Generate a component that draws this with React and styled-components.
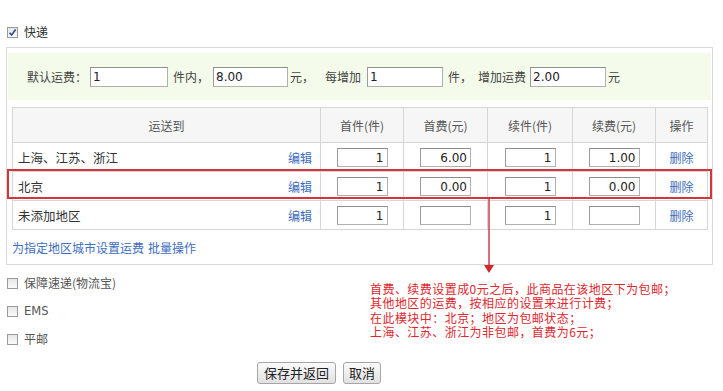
import React from 'react';
import styled, { createGlobalStyle } from 'styled-components';

const Global = createGlobalStyle`
  html, body { margin: 0; padding: 0; background: #fff; }
  body {
    font-family: "Noto Sans CJK SC", "Liberation Sans", sans-serif;
    font-size: 12px;
    color: #333;
  }
`;

const Page = styled.div`
  width: 723px;
  height: 391px;
  box-sizing: border-box;
  padding: 25px 10px 0 6px;
  overflow: hidden;
`;

const CheckRow = styled.label`
  display: flex;
  align-items: center;
  height: 14px;
  gap: 4px;
  color: ${p => p.$color || '#444'};
  font-size: 12px;
  line-height: 14px;
`;

const Box = styled.span`
  width: 11px;
  height: 11px;
  box-sizing: border-box;
  border: 1px solid #9a9a9a;
  background: linear-gradient(#e6e6e6, #fbfbfb);
  display: inline-flex;
  align-items: center;
  justify-content: center;
  margin-left: 1px;
  margin-right: 2px;
`;

const Panel = styled.div`
  position: relative;
  margin-top: 8px;
  width: 707px;
  box-sizing: border-box;
  border: 1px solid #d9d9d9;
  padding: 5px 5px 0;
`;

const Band = styled.div`
  display: flex;
  align-items: center;
  height: 47px;
  margin: 0 -4px;
  padding-left: 19px;
  background: #f4fbea;
  color: #444;
  white-space: nowrap;
`;

const BandText = styled.span`
  margin-left: ${p => p.$ml || 0}px;
`;

const Field = styled.input`
  width: ${p => p.$w}px;
  height: 20px;
  box-sizing: border-box;
  margin-left: ${p => p.$ml || 0}px;
  border: 1px solid #b0b0b0;
  border-top-color: #8e8e8e;
  border-left-color: #9c9c9c;
  padding: 0 2px;
  font-family: "DejaVu Sans", sans-serif;
  font-size: 12px;
  color: #222;
  background: #fff;
  outline: none;
`;

const Table = styled.table`
  margin-top: 7px;
  width: 695px;
  border-collapse: collapse;
  table-layout: fixed;
  border: 1px solid #d6d6d6;
`;

const Th = styled.th`
  height: 34px;
  padding: 0;
  font-weight: normal;
  font-size: 12px;
  color: #555;
  background: #f6f6f6;
  border: 1px solid #d6d6d6;
  text-align: center;
`;

const Td = styled.td`
  height: 28px;
  padding: 0;
  border: 1px solid #d6d6d6;
  text-align: center;
  vertical-align: middle;
`;

const AreaCell = styled.div`
  display: flex;
  justify-content: space-between;
  align-items: center;
  padding: 0 8px 0 5px;
  color: #333;
  font-size: 12.5px;
`;

const Link = styled.a`
  color: #3d6cc0;
  text-decoration: none;
  font-size: 12px;
  cursor: pointer;
`;

const CellInput = styled.input`
  width: 51px;
  height: 19px;
  box-sizing: border-box;
  border: 1px solid #b0b0b0;
  border-top-color: #8e8e8e;
  border-left-color: #9c9c9c;
  padding: 0 3px;
  text-align: right;
  font-family: "DejaVu Sans", sans-serif;
  font-size: 12px;
  color: #222;
  background: #fff;
  outline: none;
  vertical-align: middle;
`;

const LinkRow = styled.div`
  height: 34px;
  display: flex;
  align-items: center;
  gap: 4px;
`;

const Highlight = styled.div`
  position: absolute;
  left: 0;
  top: 121px;
  width: 705px;
  height: 30px;
  box-sizing: border-box;
  border: 2px solid #d3353b;
  pointer-events: none;
`;

const Arrow = styled.svg`
  position: absolute;
  left: 476px;
  top: 151px;
  overflow: visible;
`;

const Bottom = styled.div`
  display: flex;
  margin-top: 11px;
`;

const Options = styled.div`
  width: 364px;
  display: flex;
  flex-direction: column;
  gap: 14px;
`;

const Notes = styled.div`
  padding-top: 6px;
  color: #e0262e;
  font-size: 12px;
  line-height: 14.4px;
  letter-spacing: 0.45px;
  white-space: nowrap;
`;

const NoteLine = styled.div`
  height: 14.4px;
`;

const Buttons = styled.div`
  display: flex;
  gap: 7px;
  margin-top: 16px;
  padding-left: 251px;
`;

const Button = styled.button`
  height: 22px;
  padding: 0 ${p => p.$px || 6}px;
  box-sizing: border-box;
  border: 1px solid #a6a6a6;
  border-radius: 3px;
  background: linear-gradient(#fbfbfb, #e1e1e1);
  font-family: "Noto Sans CJK SC", sans-serif;
  font-size: 13px;
  color: #222;
  line-height: 20px;
`;

const Latin = styled.span`
  font-family: "DejaVu Sans", sans-serif;
  font-size: 11.5px;
`;

const rows = [
  { area: '上海、江苏、浙江', a: '1', b: '6.00', c: '1', d: '1.00' },
  { area: '北京', a: '1', b: '0.00', c: '1', d: '0.00' },
  { area: '未添加地区', a: '1', b: '', c: '1', d: '' },
];

const notes = [
  '首费、续费设置成0元之后，此商品在该地区下为包邮；',
  '其他地区的运费，按相应的设置来进行计费；',
  '在此模块中：北京；地区为包邮状态；',
  '上海、江苏、浙江为非包邮，首费为6元；',
];

const Check = ({ checked }) => (
  <Box>
    {checked && (
      <svg width="9" height="9" viewBox="0 0 9 9">
        <path d="M1.5 4.8 L3.6 7 L7.6 1.6" fill="none" stroke="#2b4a8a" strokeWidth="1.6" />
      </svg>
    )}
  </Box>
);

export default function App() {
  return (
    <Page>
      <Global />
      <CheckRow $color="#333">
        <Check checked />
        快递
      </CheckRow>
      <Panel>
        <Band>
          <BandText>默认运费：</BandText>
          <Field $w={78} $ml={3} defaultValue="1" />
          <BandText $ml={5}>件内，</BandText>
          <Field $w={75} $ml={4} defaultValue="8.00" />
          <BandText $ml={2}>元，</BandText>
          <BandText $ml={11}>每增加</BandText>
          <Field $w={76} $ml={6} defaultValue="1" />
          <BandText $ml={5}>件，</BandText>
          <BandText $ml={6}>增加运费</BandText>
          <Field $w={76} $ml={4} defaultValue="2.00" />
          <BandText $ml={2}>元</BandText>
        </Band>
        <Table>
          <colgroup>
            <col style={{ width: 308 }} />
            <col style={{ width: 83 }} />
            <col style={{ width: 84 }} />
            <col style={{ width: 85 }} />
            <col style={{ width: 83 }} />
            <col style={{ width: 52 }} />
          </colgroup>
          <thead>
            <tr>
              <Th>运送到</Th>
              <Th>首件(件)</Th>
              <Th>首费(元)</Th>
              <Th>续件(件)</Th>
              <Th>续费(元)</Th>
              <Th>操作</Th>
            </tr>
          </thead>
          <tbody>
            {rows.map(r => (
              <tr key={r.area}>
                <Td>
                  <AreaCell>
                    <span>{r.area}</span>
                    <Link>编辑</Link>
                  </AreaCell>
                </Td>
                <Td><CellInput defaultValue={r.a} /></Td>
                <Td><CellInput defaultValue={r.b} /></Td>
                <Td><CellInput defaultValue={r.c} /></Td>
                <Td><CellInput defaultValue={r.d} /></Td>
                <Td><Link>删除</Link></Td>
              </tr>
            ))}
          </tbody>
        </Table>
        <LinkRow>
          <Link>为指定地区城市设置运费</Link>
          <Link>批量操作</Link>
        </LinkRow>
        <Highlight />
        <Arrow width="12" height="76" viewBox="0 0 12 76">
          <line x1="6" y1="0" x2="6" y2="68" stroke="#c2242b" strokeWidth="1.3" />
          <path d="M1 66 L11 66 L6 74 Z" fill="#d0262d" />
        </Arrow>
      </Panel>
      <Bottom>
        <Options>
          <CheckRow $color="#555"><Check />保障速递(物流宝)</CheckRow>
          <CheckRow $color="#555"><Check /><Latin>EMS</Latin></CheckRow>
          <CheckRow $color="#555"><Check />平邮</CheckRow>
        </Options>
        <Notes>
          {notes.map(n => <NoteLine key={n}>{n}</NoteLine>)}
        </Notes>
      </Bottom>
      <Buttons>
        <Button $px={6}>保存并返回</Button>
        <Button $px={5}>取消</Button>
      </Buttons>
    </Page>
  );
}
